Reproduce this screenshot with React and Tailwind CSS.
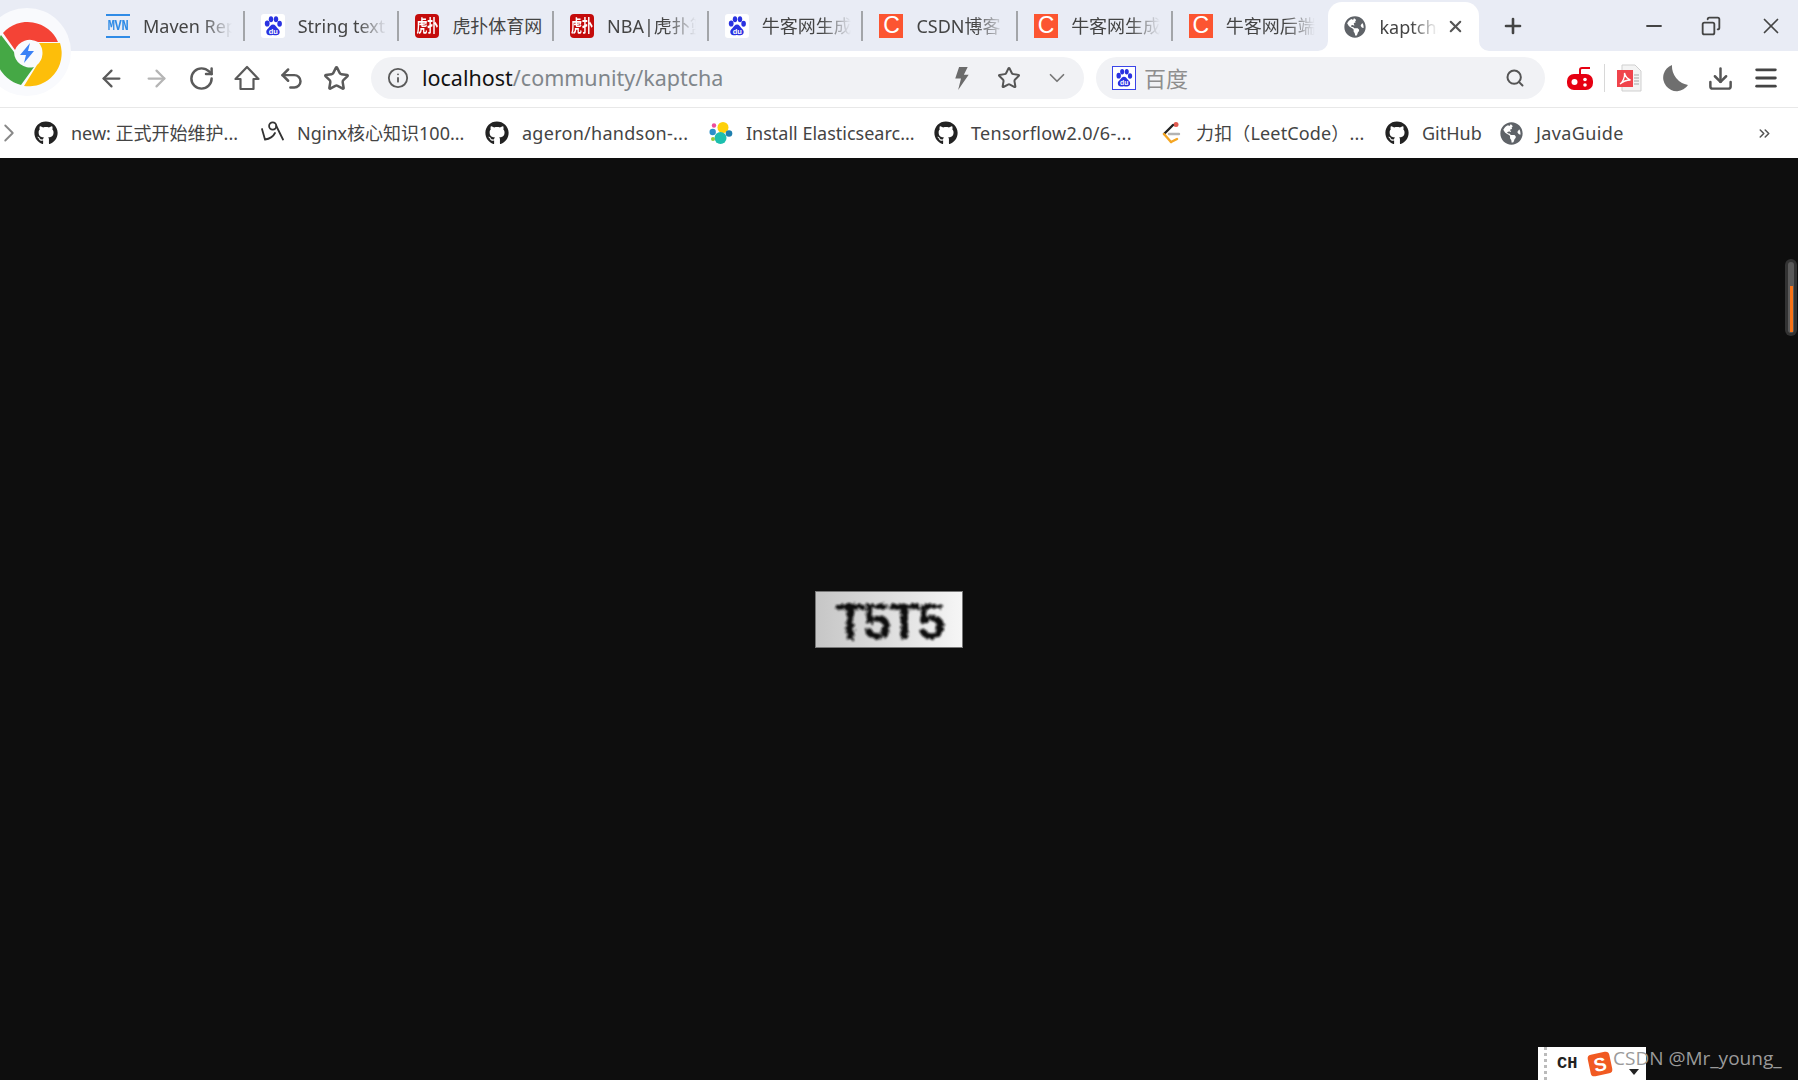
import React from "react";
import { ArrowLeft, ArrowRight, RotateCw, Undo2, Star, Info, ChevronDown, ChevronRight, Search, Download, Menu, Minus, Copy, X, Plus, ChevronsRight } from "lucide-react";
import { FaGithub, FaGlobeAmericas } from "react-icons/fa";

const Paw = ({ border }) => (
  <svg viewBox="0 0 24 24" className={`w-[24px] h-[24px] ${border ? "border border-[#3b45e8]" : "rounded-[3px]"} bg-white shrink-0`}>
    <g fill="#2932e1">
      <ellipse cx="6.200" cy="9.500" rx="2.400" ry="3.100" />
      <ellipse cx="10" cy="5.200" rx="2.200" ry="3" />
      <ellipse cx="15" cy="5.200" rx="2.200" ry="3" />
      <ellipse cx="18.600" cy="9.800" rx="2.300" ry="3" />
      <path d="M12 10.500c-2.200 0-3 2-4.400 3.400-1.500 1.400-2.500 2.400-2.300 4.400.2 2 1.800 3.200 3.600 3 1.300-.1 2-.4 3.100-.4 1.100 0 2 .4 3.300.4 1.900 0 3.300-1.200 3.400-3 .1-2-1-3-2.400-4.400-1.400-1.400-2-3.400-4.300-3.400z" />
    </g>
    <text x="12.300" y="19.500" textAnchor="middle" fontSize="7.500" fontWeight="700" fill="#fff" fontFamily="Liberation Sans">du</text>
  </svg>
);

const Hupu = () => (
  <div className="w-[24px] h-[24px] rounded-[4px] bg-[#c40b0b] grid place-items-center overflow-hidden shrink-0">
    <span className="text-white text-[11px] leading-none font-bold whitespace-nowrap scale-y-150 font-['Noto_Sans_CJK_SC',sans-serif]">虎扑</span>
  </div>
);

const Csdn = () => (
  <div className="w-[24px] h-[24px] bg-[#fc5531] grid place-items-center text-white text-[23px] leading-none shrink-0 font-['Liberation_Sans',sans-serif]">C</div>
);

const Mvn = () => (
  <div className="w-[24px] h-[24px] flex flex-col justify-between shrink-0">
    <div className="h-[2px] bg-[#2f8be6]" />
    <div className="text-[#2f8be6] text-[12px] leading-[14px] font-bold text-center tracking-[-0.300px] scale-y-125 font-['Liberation_Mono',monospace]">MVN</div>
    <div className="h-[2px] bg-[#2f8be6]" />
  </div>
);

const tabs = [
  [<Mvn />, "Maven Repository", true],
  [<Paw />, "String text", true],
  [<Hupu />, "虎扑体育网", false],
  [<Hupu />, "NBA|虎扑篮球", true],
  [<Paw />, "牛客网生成", true],
  [<Csdn />, "CSDN博客", true],
  [<Csdn />, "牛客网生成", true],
  [<Csdn />, "牛客网后端", true],
];

const Tab = ({ icon, title, last, fade }) => (
  <div className="w-[154.700px] h-full flex items-center pl-[16px] shrink-0">
    {icon}
    <span className={`ml-[13px] mt-[2px] w-[91px] overflow-hidden whitespace-nowrap text-[18px] text-[#444] ${fade ? "[mask-image:linear-gradient(to_right,black_65%,transparent_98%)]" : ""}`}>{title}</span>
    <div className="flex-1" />
    {!last && <div className="w-[2px] h-[30px] bg-[#a3a5a9]" />}
  </div>
);

const Nginx = () => (
  <svg viewBox="0 0 24 24" className="w-[24px] h-[24px] shrink-0" fill="none" stroke="#333" strokeWidth="1.800" strokeLinecap="round">
    <circle cx="12.700" cy="5" r="3.600" />
    <path d="M16.300 5L23 18.500" />
    <path d="M2 8L5 18.500C9 18 13 16 15 12" />
  </svg>
);

const Elastic = () => (
  <svg viewBox="0 0 24 24" className="w-[24px] h-[24px] shrink-0">
    <circle cx="14" cy="6.500" r="5.500" fill="#fed10a" />
    <circle cx="11.500" cy="17" r="6" fill="#1cbfae" />
    <circle cx="3.700" cy="11" r="3.200" fill="#2b8fc9" />
    <circle cx="20" cy="12.500" r="3.300" fill="#1e7fae" />
    <circle cx="5" cy="4.500" r="2.200" fill="#ee4d9a" />
    <circle cx="4" cy="18" r="2" fill="#93c83e" />
  </svg>
);

const Leet = () => (
  <svg viewBox="0 0 24 24" className="w-[24px] h-[24px] shrink-0" fill="none" strokeWidth="2.400" strokeLinecap="round">
    <circle cx="17" cy="3.500" r="2.500" fill="#e05a4f" />
    <path d="M14 4L5 13" stroke="#222" />
    <path d="M5 13l7 8" stroke="#f5a623" />
    <path d="M12 21l6-3" stroke="#f5a623" />
    <path d="M10 13h10" stroke="#b3b3b3" />
  </svg>
);

const gh = <FaGithub className="w-[24px] h-[24px] text-[#222] shrink-0" />;
const globe = <FaGlobeAmericas className="w-[23px] h-[23px] text-[#5f6368] shrink-0" />;

const bookmarks = [
  [gh, "new: 正式开始维护...", "w-[226px]", ""],
  [<Nginx />, "Nginx核心知识100...", "w-[225px]", ""],
  [gh, "ageron/handson-...", "w-[224px]", "tracking-[0.270px]"],
  [<Elastic />, "Install Elasticsearc...", "w-[225px]", ""],
  [gh, "Tensorflow2.0/6-...", "w-[225px]", "tracking-[0.300px]"],
  [<Leet />, "力扣（LeetCode）...", "w-[226px]", "tracking-[0.150px]"],
  [gh, "GitHub", "w-[115px]", ""],
  [globe, "JavaGuide", "w-[200px]", "tracking-[0.380px]"],
];

const Btn = ({ children }) => <div className="w-[45px] h-full grid place-items-center shrink-0 text-[#5a5a5a]">{children}</div>;

export default function App() {
  return (
    <div className="relative w-full h-screen overflow-hidden flex flex-col bg-[#0e0e0e] font-['Noto_Sans','Noto_Sans_CJK_SC',sans-serif]">
      <div className="h-[51px] bg-[#e9ecf5] flex pl-[90px] items-stretch shrink-0">
        {tabs.map(([icon, title, fade], i) => (
          <Tab key={i} icon={icon} title={title} fade={fade} last={i === tabs.length - 1} />
        ))}
        <div className="relative w-[151px] mt-[2px] bg-white rounded-t-[14px] flex items-center pl-[16px] shrink-0">
          <FaGlobeAmericas className="w-[22px] h-[22px] text-[#5f6368]" />
          <span className="ml-[14px] mt-[1px] w-[58px] overflow-hidden whitespace-nowrap text-[18px] text-[#444] [mask-image:linear-gradient(to_right,black_55%,transparent)]">kaptcha</span>
          <X className="ml-[8px] w-[19px] h-[19px] text-[#555]" strokeWidth={2.600} />
          <svg viewBox="0 0 10 10" className="absolute -left-[10px] bottom-0 w-[10px] h-[10px]"><path d="M10 0v10H0a10 10 0 0 0 10-10z" fill="#fff" /></svg>
          <svg viewBox="0 0 10 10" className="absolute -right-[10px] bottom-0 w-[10px] h-[10px]"><path d="M0 0v10h10A10 10 0 0 1 0 0z" fill="#fff" /></svg>
        </div>
        <div className="ml-[20px] grid place-items-center w-[28px]"><Plus className="w-[24px] h-[24px] text-[#444]" strokeWidth={2.600} /></div>
        <div className="ml-[113px] grid place-items-center w-[28px]"><Minus className="w-[24px] h-[24px] text-[#444]" strokeWidth={1.800} /></div>
        <div className="ml-[30px] grid place-items-center w-[26px]"><Copy className="w-[20px] h-[20px] text-[#444] -scale-x-100" strokeWidth={2.200} /></div>
        <div className="ml-[33px] grid place-items-center w-[28px]"><X className="w-[26px] h-[26px] text-[#444]" strokeWidth={1.600} /></div>
      </div>

      <div className="h-[56px] bg-white flex items-center pl-[89px] pb-[2px] shrink-0">
        <Btn><ArrowLeft className="w-[27px] h-[27px]" strokeWidth={2} /></Btn>
        <Btn><ArrowRight className="w-[27px] h-[27px] text-[#b5b5b5]" strokeWidth={2} /></Btn>
        <Btn><RotateCw className="w-[27px] h-[27px]" strokeWidth={2.200} /></Btn>
        <Btn>
          <svg viewBox="0 0 28 28" className="w-[28px] h-[28px]" fill="none" stroke="currentColor" strokeWidth="2.200" strokeLinejoin="round">
            <path d="M14 3L2.500 15H7.500V25H20.500V15H25.500Z" />
          </svg>
        </Btn>
        <Btn><Undo2 className="w-[27px] h-[27px]" strokeWidth={2.200} /></Btn>
        <Btn><Star className="w-[27px] h-[27px]" strokeWidth={2.200} /></Btn>
        <div className="ml-[12px] w-[713px] h-[42px] rounded-full bg-[#f1f2f5] flex items-center pl-[16px] pr-[4px] shrink-0">
          <Info className="w-[22px] h-[22px] text-[#5a5a5a]" strokeWidth={2} />
          <span className="ml-[13px] text-[21.500px] text-[#111] whitespace-nowrap">localhost<span className="text-[#80868b]">/community/kaptcha</span></span>
          <div className="ml-auto flex items-center">
            <div className="w-[47px] grid place-items-center -translate-x-[2px]">
              <svg viewBox="0 0 16 24" className="w-[16px] h-[23px]" fill="#6b6b6b"><path d="M6 0h9l-4 8h5L5 24l3-12H2z" /></svg>
            </div>
            <div className="w-[47px] grid place-items-center -translate-x-[1px]"><Star className="w-[24px] h-[24px] text-[#555]" strokeWidth={2} /></div>
            <div className="w-[47px] grid place-items-center"><ChevronDown className="w-[26px] h-[26px] text-[#777]" strokeWidth={1.600} /></div>
          </div>
        </div>
        <div className="ml-[12px] w-[449px] h-[42px] rounded-full bg-[#f1f2f5] flex items-center pl-[16px] pr-[20px] shrink-0">
          <Paw border />
          <span className="ml-[8px] text-[22px] text-[#8e8e8e]">百度</span>
          <Search className="ml-auto w-[20px] h-[20px] text-[#555]" strokeWidth={2.400} />
        </div>
        <div className="ml-[21px] w-[28px] grid place-items-center shrink-0">
          <svg viewBox="0 0 28 26" className="w-[28px] h-[26px]">
            <path d="M14 9V5q0-2 2-2h8" fill="none" stroke="#e60012" strokeWidth="2" />
            <rect x="1" y="9" width="26" height="16" rx="7" fill="#e60012" />
            <circle cx="8.500" cy="17" r="3" fill="#fff" />
            <circle cx="19" cy="14.500" r="1.800" fill="#fff" />
            <circle cx="19" cy="20" r="1.800" fill="#fff" />
          </svg>
        </div>
        <div className="ml-[10px] w-px h-[28px] bg-[#d8d8d8] shrink-0" />
        <div className="ml-[11px] w-[26px] grid place-items-center shrink-0">
          <svg viewBox="0 0 26 28" className="w-[26px] h-[28px]">
            <path d="M6 1h13l6 6v20H6z" fill="#f4f4f4" stroke="#cfcfcf" />
            <path d="M18 11h5M18 14h5M18 17h5M18 20h5" stroke="#a5a5a5" />
            <rect x="1" y="6" width="16" height="17" fill="#f0444c" />
            <path d="M4 20c3-2 5-7 4.500-11 1 4 3 6 6 7-3 0-7 1-10.500 4z" fill="none" stroke="#fff" strokeWidth="1.300" />
          </svg>
        </div>
        <div className="ml-[20px] w-[26px] grid place-items-center shrink-0">
          <svg viewBox="0 0 26 28" className="w-[26px] h-[28px]"><path d="M10 1A13.500 13.500 0 1 0 26 21A19 19 0 0 1 10 1z" fill="#6f6f6f" /></svg>
        </div>
        <div className="ml-[19px] w-[26px] grid place-items-center shrink-0"><Download className="w-[27px] h-[27px] text-[#555]" strokeWidth={2.200} /></div>
        <div className="ml-[19px] w-[26px] grid place-items-center shrink-0"><Menu className="w-[28px] h-[28px] text-[#444]" strokeWidth={2.400} /></div>
      </div>

      <div className="h-[51px] bg-white border-t border-[#e8e8e8] flex items-center shrink-0">
        <div className="w-[34px] shrink-0"><ChevronRight className="w-[30px] h-[30px] -ml-[6px] text-[#888]" strokeWidth={1.500} /></div>
        {bookmarks.map(([icon, label, w, track], i) => (
          <div key={i} className={`${w} flex items-center gap-[13px] shrink-0`}>
            {icon}
            <span className={`text-[18px] text-[#444] whitespace-nowrap ${track}`}>{label}</span>
          </div>
        ))}
        <ChevronsRight className="ml-auto mr-[25px] w-[17px] h-[17px] text-[#555]" strokeWidth={2.200} />
      </div>

      <main className="flex-1 grid place-items-center pr-[20px] pt-[1px] bg-[#0e0e0e]">
        <div className="w-[148px] h-[57px] border border-[#777] bg-gradient-to-r from-[#c6c6c6] to-[#f6f6f6] grid place-items-center overflow-hidden">
          <svg width="0" height="0" className="absolute">
            <filter id="warp" x="-10%" y="-10%" width="120%" height="120%">
              <feTurbulence type="fractalNoise" baseFrequency="0.300" numOctaves="2" seed="4" />
              <feDisplacementMap in="SourceGraphic" scale="7" />
              <feGaussianBlur stdDeviation="1" />
            </filter>
          </svg>
          <span className="mt-[5px] text-[50px] leading-none font-bold tracking-[-2px] text-[#111] font-['Liberation_Sans',sans-serif] [filter:url(#warp)]">T5T5</span>
        </div>
      </main>

      <div className="absolute left-0 top-0 w-[72px] h-[96px] overflow-hidden">
        <svg viewBox="-27 -53 99 96" className="w-[99px] h-[96px] absolute left-0 top-0">
          <circle cx="0" cy="-1" r="44" fill="#f9fafd" />
          <path d="M-24-20A33 33 0 0 1 31-11L11-11A16 16 0 0 0-12-3Z" fill="#f44336" />
          <path d="M33-10A33 33 0 0 1-3 33L10 12A16 16 0 0 0 12-10Z" fill="#fdbe0a" />
          <path d="M-26-18L-13-1A16 16 0 0 0 7 14L-6 32A33 33 0 0 1-26-18Z" fill="#45a845" />
          <path d="M3-10L-7 2H-1L-3 10L7-2H1Z" fill="#3b82f6" />
        </svg>
      </div>

      <div className="absolute left-[1785px] top-[259px] w-[12px] h-[77px] rounded-full bg-[#333] flex justify-center pt-[3px]">
        <div className="relative w-[6px] h-[71px] rounded-full bg-[#5a5a5a]">
          <div className="absolute left-[1.500px] top-[24px] bottom-[1px] w-[3px] bg-[#f97316]" />
        </div>
      </div>

      <div className="absolute left-[1538px] top-[1047px] w-[108px] h-[33px] bg-white flex items-center font-['Liberation_Mono',monospace]">
        <div className="ml-[6px] h-full w-[3px] border-l-[3px] border-dotted border-[#bbb]" />
        <span className="ml-[10px] text-[17px] font-bold text-[#222]">CH</span>
        <div className="ml-[12px] w-[22px] h-[22px] rounded-[4px] rotate-[-12deg] bg-[#f15a22] grid place-items-center text-white text-[19px] leading-none font-bold font-['Liberation_Sans',sans-serif]">S</div>
        <div className="ml-[18px] mt-[16px] w-0 h-0 border-x-[5px] border-x-transparent border-t-[6px] border-t-[#222]" />
      </div>
      <div className="absolute left-[1613px] top-[1044px] text-[19px] leading-[28px] text-[#9a9a9a] whitespace-nowrap font-['Open_Sans',sans-serif]">CSDN @Mr_young_</div>
    </div>
  );
}
